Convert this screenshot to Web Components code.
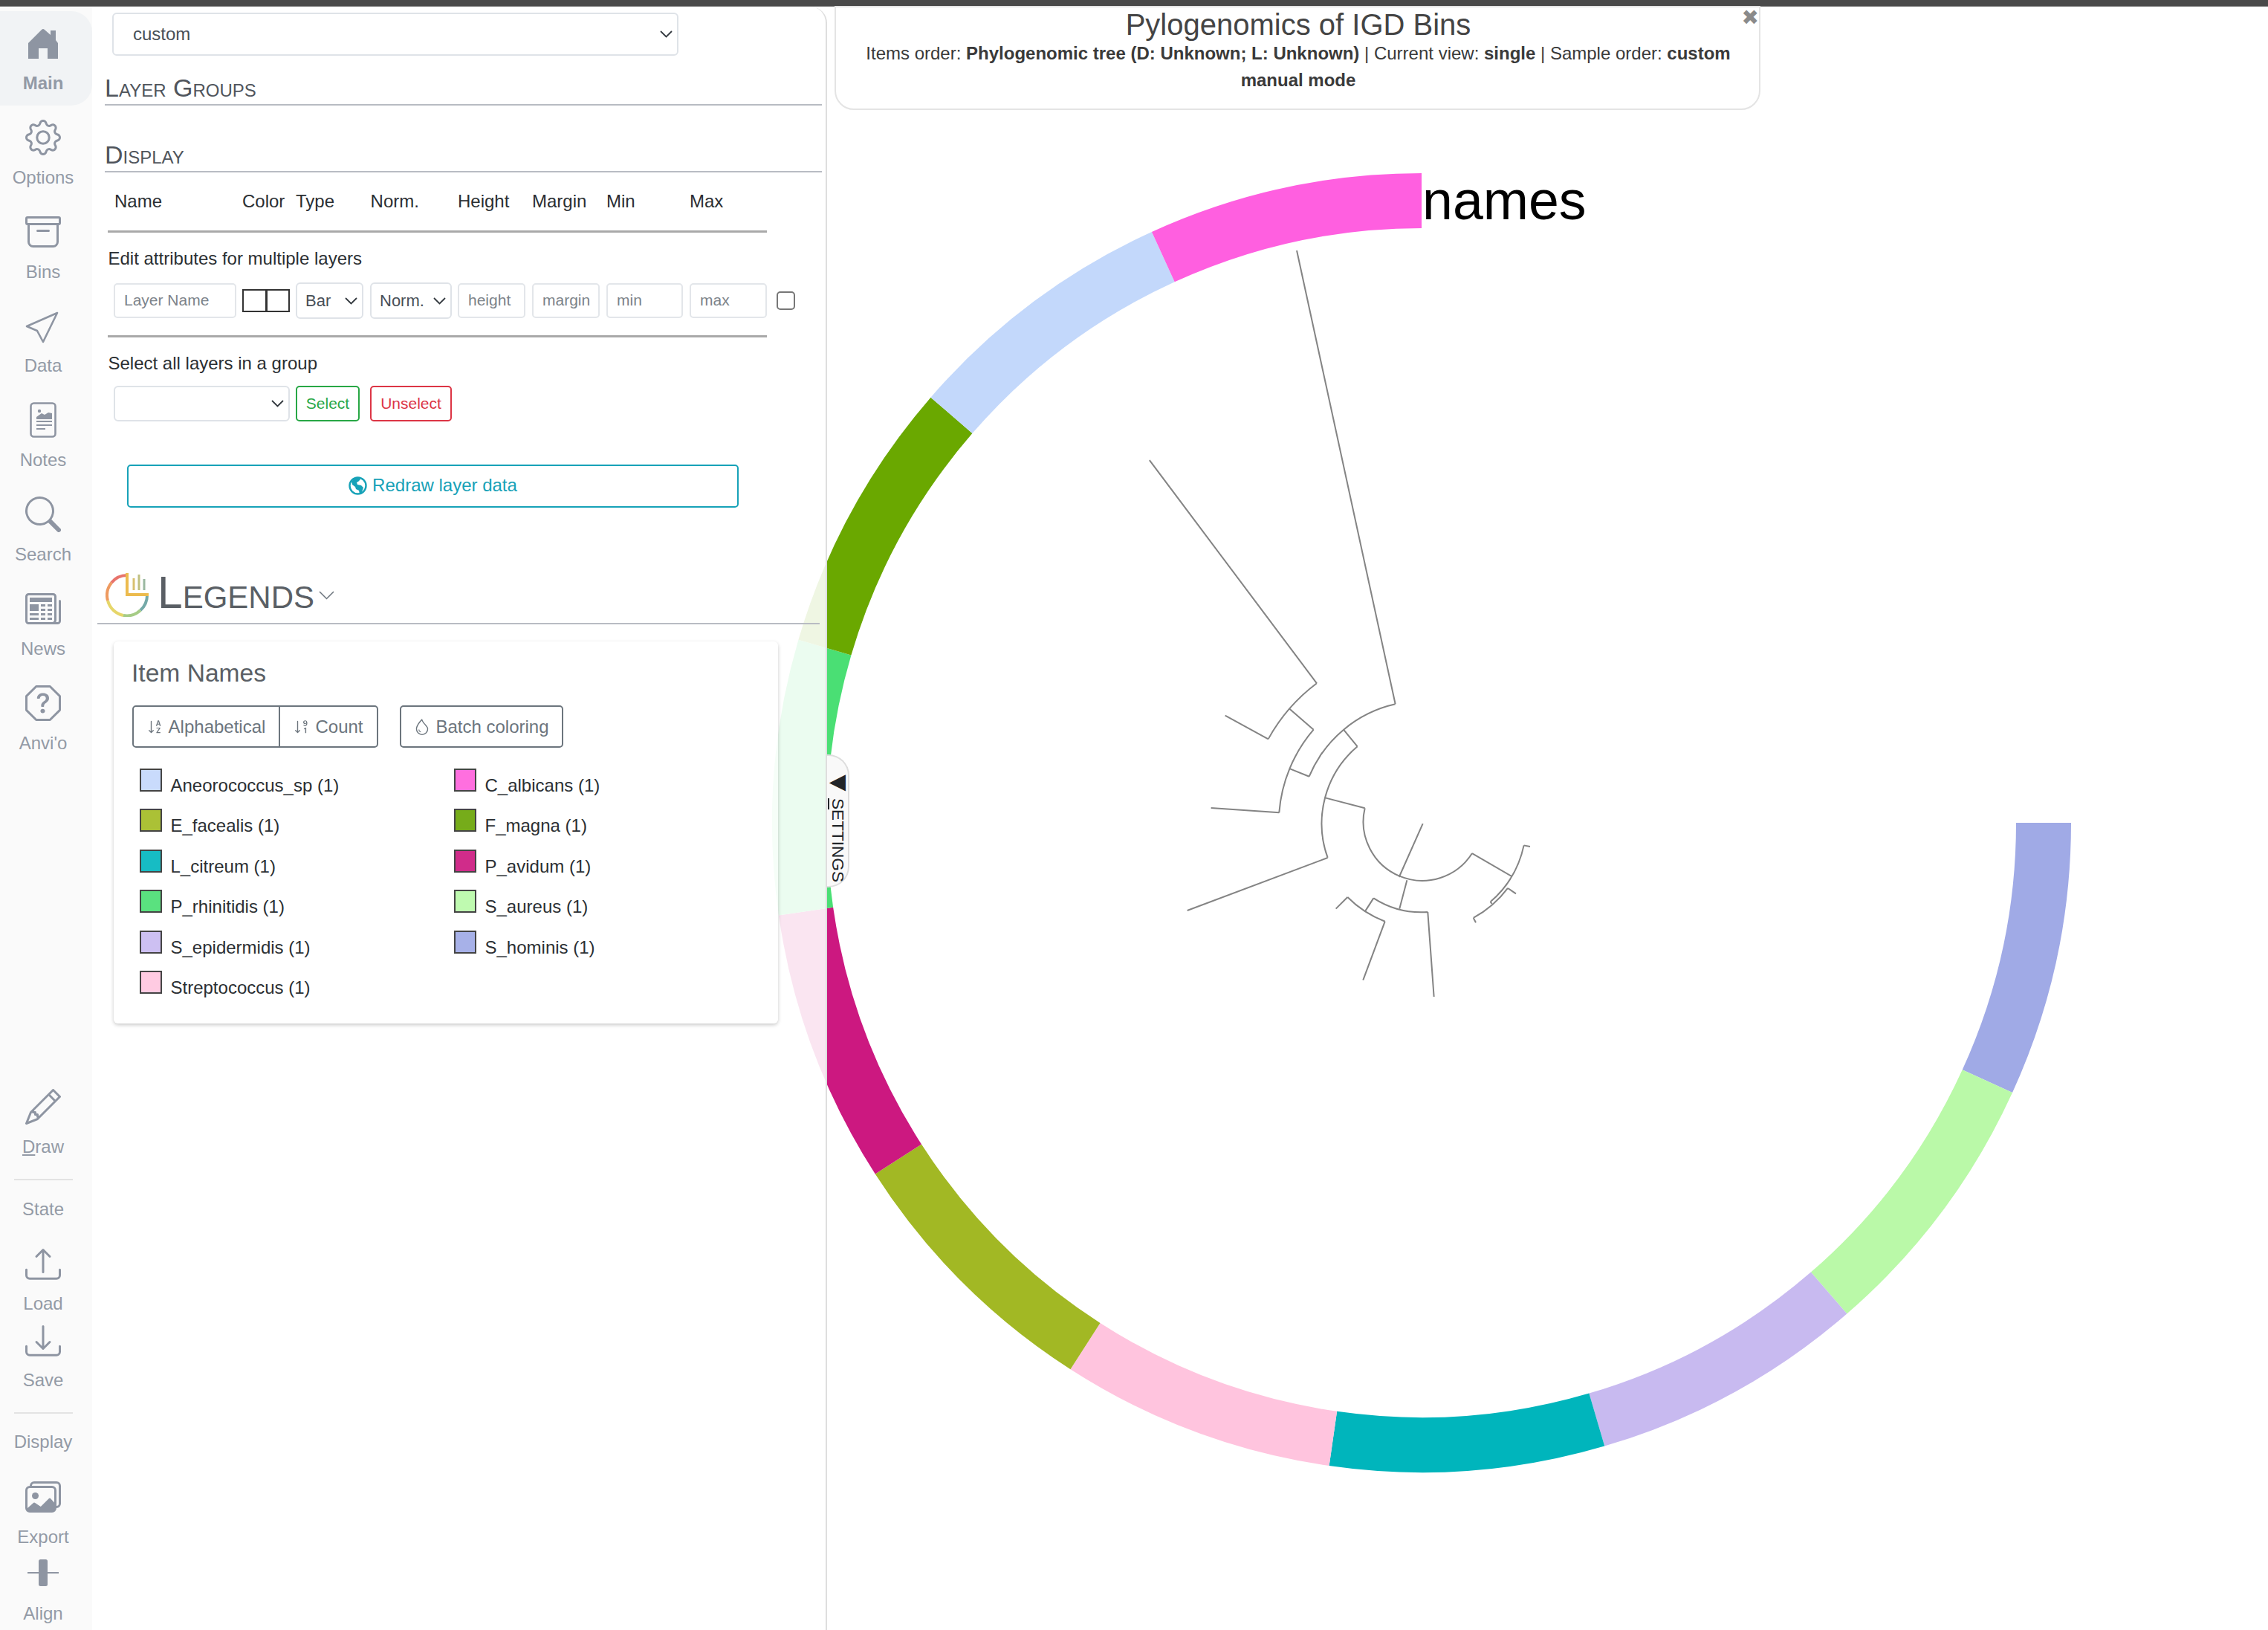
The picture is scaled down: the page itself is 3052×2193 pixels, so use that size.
<!DOCTYPE html>
<html><head><meta charset="utf-8"><title>Pylogenomics of IGD Bins</title>
<style>
html,body{margin:0;padding:0;background:#fff;height:2193px;overflow:hidden;font-family:"Liberation Sans",Arial,sans-serif;font-size:24px;color:#212529}
</style></head><body>
<anvio-canvas></anvio-canvas>
<app-shell>
  <side-bar slot="side"></side-bar>
  <settings-panel slot="panel"></settings-panel>
  <title-panel slot="main">
    <span slot="title">Pylogenomics of IGD Bins</span>
    Items order: <b>Phylogenomic tree (D: Unknown; L: Unknown)</b> | Current view: <b>single</b> | Sample order: <b>custom</b><br><b>manual mode</b>
  </title-panel>
</app-shell>
<script>
function def(name, html, setup){
  customElements.define(name, class extends HTMLElement{
    constructor(){super();const r=this.attachShadow({mode:'open'});r.innerHTML=html;}
    connectedCallback(){ if(setup && !this._done){this._done=true;setup(this,this.shadowRoot);} }
  });
}
const ICONS={
main:`<svg viewBox="0 0 48 48"><path fill="currentColor" d="M4 24 22 6q2-2 4 0l8 7V7h7v13l3 4v21H30V31H18v14H4z"/></svg>`,
options:`<svg viewBox="0 0 16 16"><path fill="currentColor" d="M8 4.754a3.246 3.246 0 1 0 0 6.492 3.246 3.246 0 0 0 0-6.492zM5.754 8a2.246 2.246 0 1 1 4.492 0 2.246 2.246 0 0 1-4.492 0z"/><path fill="currentColor" d="M9.796 1.343c-.527-1.79-3.065-1.79-3.592 0l-.094.319a.873.873 0 0 1-1.255.52l-.292-.16c-1.64-.892-3.433.902-2.54 2.541l.159.292a.873.873 0 0 1-.52 1.255l-.319.094c-1.79.527-1.79 3.065 0 3.592l.319.094a.873.873 0 0 1 .52 1.255l-.16.292c-.892 1.64.901 3.434 2.541 2.54l.292-.159a.873.873 0 0 1 1.255.52l.094.319c.527 1.79 3.065 1.79 3.592 0l.094-.319a.873.873 0 0 1 1.255-.52l.292.16c1.64.893 3.434-.902 2.54-2.541l-.159-.292a.873.873 0 0 1 .52-1.255l.319-.094c1.79-.527 1.79-3.065 0-3.592l-.319-.094a.873.873 0 0 1-.52-1.255l.16-.292c.893-1.64-.902-3.433-2.541-2.54l-.292.159a.873.873 0 0 1-1.255-.52l-.094-.319zm-2.633.283c.246-.835 1.428-.835 1.674 0l.094.319a1.873 1.873 0 0 0 2.693 1.115l.291-.16c.764-.415 1.6.42 1.184 1.185l-.159.292a1.873 1.873 0 0 0 1.116 2.692l.318.094c.835.246.835 1.428 0 1.674l-.319.094a1.873 1.873 0 0 0-1.115 2.693l.16.291c.415.764-.42 1.6-1.185 1.184l-.291-.159a1.873 1.873 0 0 0-2.693 1.116l-.094.318c-.246.835-1.428.835-1.674 0l-.094-.319a1.873 1.873 0 0 0-2.692-1.115l-.292.16c-.764.415-1.6-.42-1.184-1.185l.159-.291A1.873 1.873 0 0 0 1.945 8.93l-.319-.094c-.835-.246-.835-1.428 0-1.674l.319-.094A1.873 1.873 0 0 0 3.06 4.377l-.16-.292c-.415-.764.42-1.6 1.185-1.184l.292.159a1.873 1.873 0 0 0 2.692-1.115l.094-.319z"/></svg>`,
bins:`<svg viewBox="0 0 16 16"><path fill="currentColor" d="M0 2a1 1 0 0 1 1-1h14a1 1 0 0 1 1 1v2a1 1 0 0 1-1 1v7.5a2.5 2.5 0 0 1-2.5 2.5h-9A2.5 2.5 0 0 1 1 12.5V5a1 1 0 0 1-1-1V2zm2 3v7.5A1.5 1.5 0 0 0 3.5 14h9a1.5 1.5 0 0 0 1.5-1.5V5H2zm13-3H1v2h14V2zM5 7.5a.5.5 0 0 1 .5-.5h5a.5.5 0 0 1 0 1h-5a.5.5 0 0 1-.5-.5z"/></svg>`,
data:`<svg viewBox="0 0 48 48"><path fill="none" stroke="currentColor" stroke-width="2.6" stroke-linejoin="round" d="M43 7 2 25l14 6 8 15z"/></svg>`,
notes:`<svg viewBox="0 0 48 48"><g transform="translate(6 0)"><rect x="1.5" y="1.5" width="33" height="45" rx="4" fill="none" stroke="currentColor" stroke-width="2.6"/><circle cx="13" cy="12" r="2.2" fill="currentColor"/><path fill="currentColor" d="M9 23v-3l7-5 4 2 5-3 5 1v8z"/><path stroke="currentColor" stroke-width="2.2" d="M9 26h21M9 31h21M9 36h12"/></g></svg>`,
search:`<svg viewBox="0 0 16 16"><path fill="currentColor" d="M11.742 10.344a6.5 6.5 0 1 0-1.397 1.398h-.001c.03.04.062.078.098.115l3.85 3.85a1 1 0 0 0 1.415-1.414l-3.85-3.85a1.007 1.007 0 0 0-.115-.1zM12 6.5a5.5 5.5 0 1 1-11 0 5.5 5.5 0 0 1 11 0z"/></svg>`,
news:`<svg viewBox="0 0 16 16"><path fill="currentColor" d="M0 2.5A1.5 1.5 0 0 1 1.5 1h11A1.5 1.5 0 0 1 14 2.5v10.528c0 .3-.05.654-.238.972h.738a.5.5 0 0 0 .5-.5v-9a.5.5 0 0 1 1 0v9a1.5 1.5 0 0 1-1.5 1.5H1.497A1.497 1.497 0 0 1 0 13.5v-11zM12 14c.37 0 .654-.211.853-.441.092-.106.147-.279.147-.531V2.5a.5.5 0 0 0-.5-.5h-11a.5.5 0 0 0-.5.5v11c0 .278.223.5.497.5H12z"/><path fill="currentColor" d="M2 3h10v2H2V3zm0 3h4v3H2V6zm0 4h4v1H2v-1zm0 2h4v1H2v-1zm5-6h2v1H7V6zm3 0h2v1h-2V6zM7 8h2v1H7V8zm3 0h2v1h-2V8zm-3 2h2v1H7v-1zm3 0h2v1h-2v-1zm-3 2h2v1H7v-1zm3 0h2v1h-2v-1z"/></svg>`,
anvio:`<svg viewBox="0 0 16 16"><path fill="currentColor" d="M4.54.146A.5.5 0 0 1 4.893 0h6.214a.5.5 0 0 1 .353.146l4.394 4.394a.5.5 0 0 1 .146.353v6.214a.5.5 0 0 1-.146.353l-4.394 4.394a.5.5 0 0 1-.353.146H4.893a.5.5 0 0 1-.353-.146L.146 11.46A.5.5 0 0 1 0 11.107V4.893a.5.5 0 0 1 .146-.353L4.54.146zM5.1 1 1 5.1v5.8L5.1 15h5.8l4.1-4.1V5.1L10.9 1H5.1z"/><path fill="currentColor" d="M5.255 5.786a.237.237 0 0 0 .241.247h.825c.138 0 .248-.113.266-.25.09-.656.54-1.134 1.342-1.134.686 0 1.314.343 1.314 1.168 0 .635-.374.927-.965 1.371-.673.489-1.206 1.06-1.168 1.987l.003.217a.25.25 0 0 0 .25.246h.811a.25.25 0 0 0 .25-.25v-.105c0-.718.273-.927 1.01-1.486.609-.463 1.244-.977 1.244-2.056 0-1.511-1.276-2.241-2.673-2.241-1.267 0-2.655.59-2.75 2.286zm1.557 5.763c0 .533.425.927 1.01.927.609 0 1.028-.394 1.028-.927 0-.552-.42-.94-1.029-.94-.584 0-1.009.388-1.009.94z"/></svg>`,
draw:`<svg viewBox="0 0 16 16"><path fill="currentColor" d="M12.146.146a.5.5 0 0 1 .708 0l3 3a.5.5 0 0 1 0 .708l-10 10a.5.5 0 0 1-.168.11l-5 2a.5.5 0 0 1-.65-.65l2-5a.5.5 0 0 1 .11-.168l10-10zM11.207 2.5 13.5 4.793 14.793 3.5 12.5 1.207 11.207 2.5zm1.586 3L10.5 3.207 4 9.707V10h.5a.5.5 0 0 1 .5.5v.5h.5a.5.5 0 0 1 .5.5v.5h.293l6.5-6.5zm-9.761 5.175-.106.106-1.528 3.821 3.821-1.528.106-.106A.5.5 0 0 1 5 12.5V12h-.5a.5.5 0 0 1-.5-.5V11h-.5a.5.5 0 0 1-.468-.325z"/></svg>`,
load:`<svg viewBox="0 0 16 16"><path fill="currentColor" d="M.5 9.9a.5.5 0 0 1 .5.5v2.5a1 1 0 0 0 1 1h12a1 1 0 0 0 1-1v-2.5a.5.5 0 0 1 1 0v2.5a2 2 0 0 1-2 2H2a2 2 0 0 1-2-2v-2.5a.5.5 0 0 1 .5-.5z"/><path fill="currentColor" d="M7.646 1.146a.5.5 0 0 1 .708 0l3 3a.5.5 0 0 1-.708.708L8.5 2.707V11.5a.5.5 0 0 1-1 0V2.707L5.354 4.854a.5.5 0 1 1-.708-.708l3-3z"/></svg>`,
save:`<svg viewBox="0 0 16 16"><path fill="currentColor" d="M.5 9.9a.5.5 0 0 1 .5.5v2.5a1 1 0 0 0 1 1h12a1 1 0 0 0 1-1v-2.5a.5.5 0 0 1 1 0v2.5a2 2 0 0 1-2 2H2a2 2 0 0 1-2-2v-2.5a.5.5 0 0 1 .5-.5z"/><path fill="currentColor" d="M7.646 11.854a.5.5 0 0 0 .708 0l3-3a.5.5 0 0 0-.708-.708L8.5 10.293V1.5a.5.5 0 0 0-1 0v8.793L5.354 8.146a.5.5 0 1 0-.708.708l3 3z"/></svg>`,
export:`<svg viewBox="0 0 16 16"><path fill="currentColor" d="M4.502 9a1.5 1.5 0 1 0 0-3 1.5 1.5 0 0 0 0 3z"/><path fill="currentColor" d="M14.002 13a2 2 0 0 1-2 2h-10a2 2 0 0 1-2-2V5A2 2 0 0 1 2 3a2 2 0 0 1 2-2h10a2 2 0 0 1 2 2v8a2 2 0 0 1-1.998 2zM14 2H4a1 1 0 0 0-1 1h9.002a2 2 0 0 1 2 2v7A1 1 0 0 0 15 11V3a1 1 0 0 0-1-1zM2.002 4a1 1 0 0 0-1 1v8l2.646-2.354a.5.5 0 0 1 .63-.062l2.66 1.773 3.71-3.71a.5.5 0 0 1 .577-.094l1.777 1.947V5a1 1 0 0 0-1-1h-10z"/><path fill="currentColor" d="M1 13.5 3.9 11l2.9 1.9 4-3.8L13.2 12v1a1.4 1.4 0 0 1-1.2 1.4H2z"/></svg>`,
align:`<svg viewBox="0 0 48 48"><path fill="currentColor" d="M3 23h15v2H3zM30 23h15v2H30z"/><rect x="18" y="6" width="12" height="36" rx="2.5" fill="currentColor"/></svg>`
};
const CHEV=`<svg width="17" height="10" viewBox="0 0 17 10"><path d="M1 1l7.5 7.5L16 1" fill="none" stroke="#343a40" stroke-width="1.8"/></svg>`;

def('app-shell',`<style>
:host{display:flex;flex-direction:column;position:relative;z-index:1;width:3052px;height:2193px}
.bar{height:8px;background:#4a4a4a;flex:none;border-bottom:1px solid #777}
.row{display:flex;flex:1;min-height:0}
.main{flex:1;min-width:0}
</style><div class="bar"></div><div class="row"><slot name="side"></slot><slot name="panel"></slot><div class="main"><slot name="main"></slot></div></div>`);

def('side-bar',`<style>
:host{display:block;width:124px;flex:none;background:#fafafa;box-sizing:border-box;padding-top:6px;height:2184px}
hr{border:0;height:2px;background:#e3e3e3;width:79px;margin:0 0 0 19px}
.lbl{width:116px;text-align:center;font-size:24px;line-height:36px;color:#939aa6}
</style>
<side-item icon="main" selected>Main</side-item>
<side-item icon="options">Options</side-item>
<side-item icon="bins">Bins</side-item>
<side-item icon="data">Data</side-item>
<side-item icon="notes">Notes</side-item>
<side-item icon="search">Search</side-item>
<side-item icon="news">News</side-item>
<side-item icon="anvio">Anvi'o</side-item>
<side-item icon="draw" style="margin-top:417px"><u>D</u>raw</side-item>
<hr style="margin-top:13px">
<div class="lbl" style="margin-top:21px">State</div>
<side-item icon="load" style="--pt:32px;--gap:11px;--h:auto">Load</side-item>
<side-item icon="save" style="--pt:8px;--gap:11px;--h:auto">Save</side-item>
<hr style="margin-top:25px">
<div class="lbl" style="margin-top:20px">Display</div>
<side-item icon="export" style="--pt:32px;--gap:12px;--h:auto">Export</side-item>
<side-item icon="align" style="--pt:6px;--gap:13px;--h:auto">Align</side-item>
`);

def('side-item',`<style>
:host{display:block;width:124px;height:var(--h,126.8px);box-sizing:border-box;padding:var(--pt,19px) 8px 0 0;color:#8e95a2}
:host([selected]){background:#f1f3f5;border-radius:0 28px 28px 0}
:host([selected]) .t{font-weight:700}
.i{display:block;width:48px;height:48px;margin:0 auto}
.i svg{display:block;width:48px;height:48px}
.t{display:block;text-align:center;font-size:24px;line-height:36px;margin-top:var(--gap,12px);color:#939aa6}
</style><span class="i"></span><span class="t"><slot></slot></span>`,(h,r)=>{r.querySelector('.i').innerHTML=ICONS[h.getAttribute('icon')];});

def('section-head',`<style>
:host{display:block;height:40px;border-bottom:2px solid #b8bcc3;font-size:34px;line-height:36px;font-variant:small-caps;color:#50555c}
</style><slot></slot>`);

def('f-select',`<style>
:host{display:flex;align-items:center;justify-content:space-between;box-sizing:border-box;border:2px solid #dfe3e8;border-radius:6px;background:#fff;padding:0 6px 0 var(--pl,11px);font-size:var(--fs,22px);color:#495057;flex:none}
</style><span><slot></slot></span>${CHEV}`);

def('f-input',`<style>
:host{display:flex;align-items:center;box-sizing:border-box;height:47px;border:2px solid #e3e6ea;border-radius:5px;padding:0 0 2px 12px;font-size:21px;color:#7c838a;flex:none;background:#fff}
</style><slot></slot>`);

def('o-btn',`<style>
:host{display:inline-flex;align-items:center;justify-content:center;box-sizing:border-box;border:2px solid currentColor;border-radius:5px;flex:none;gap:7px;background:rgba(255,255,255,.6)}
</style><slot></slot>`);

def('legend-item',`<style>
:host{display:flex;align-items:flex-start;gap:11.5px;height:54.4px;font-size:24px;line-height:36px;color:#2b2f33}
i{display:block;box-sizing:border-box;width:30px;height:31px;border:2px solid #444;background:var(--c);flex:none}
span{margin-top:5px}
</style><i></i><span><slot></slot></span>`);

def('legend-card',`<style>
:host{display:block;box-sizing:border-box;width:894px;height:514px;margin:23px 0 0 12px;padding:23px 0 0 24px;background:rgba(255,255,255,.55);border-radius:6px;box-shadow:0 2px 5px rgba(0,0,0,.22)}
h3{margin:0;font-weight:400;font-size:33.6px;line-height:40px;color:#5a5f65}
.btns{display:flex;margin:23px 0 0 1px;color:#6c757d;font-size:24px}
.group{display:flex;height:57px;width:331px;box-sizing:border-box;border:2px solid #6c757d;border-radius:5px}
.group div{display:flex;align-items:center;justify-content:center;gap:7px}
.group div:first-child{width:195px;border-right:2px solid #6c757d}
.group div:last-child{flex:1}
o-btn{width:220px;height:57px;margin-left:29px;color:#6c757d}
svg{width:22px;height:22px;fill:currentColor;flex:none}
.grid{display:grid;grid-template-columns:423px 423px;margin:28px 0 0 11px}
</style>
<h3>Item Names</h3>
<div class="btns">
<div class="group">
<div><svg viewBox="0 0 16 16"><path d="M10.082 5.629 9.664 7H8.598l1.789-5.332h1.234L13.402 7h-1.12l-.419-1.371h-1.781zm1.57-.785L11 2.687h-.047l-.652 2.157h1.351z"/><path d="M12.96 14H9.028v-.691l2.579-3.72v-.054H9.098v-.867h3.785v.691l-2.567 3.72v.054h2.645V14zM4.5 2.5a.5.5 0 0 0-1 0v9.793l-1.146-1.147a.5.5 0 0 0-.708.708l2 1.999.007.007a.497.497 0 0 0 .7-.006l2-2a.5.5 0 0 0-.707-.708L4.5 12.293V2.5z"/></svg><span>Alphabetical</span></div>
<div><svg viewBox="0 0 16 16"><path transform="translate(0 7)" d="M12.438 1.668V7H11.39V2.684h-.051l-1.211.859v-.969l1.262-.906h1.046z"/><path transform="translate(0 -7)" d="M11.36 14.098c-1.137 0-1.708-.657-1.762-1.278h1.004c.058.223.343.45.773.45.824 0 1.164-.829 1.133-1.856h-.059c-.148.39-.57.742-1.261.742-.91 0-1.72-.613-1.72-1.758 0-1.148.848-1.835 1.973-1.835 1.09 0 2.063.636 2.063 2.687 0 1.867-.723 2.848-2.145 2.848zm.062-2.735c.504 0 .933-.336.933-.972 0-.633-.398-1.008-.94-1.008-.52 0-.927.375-.927 1 0 .64.418.98.934.98z"/><path d="M4.5 2.5a.5.5 0 0 0-1 0v9.793l-1.146-1.147a.5.5 0 0 0-.708.708l2 1.999.007.007a.497.497 0 0 0 .7-.006l2-2a.5.5 0 0 0-.707-.708L4.5 12.293V2.5z"/></svg><span>Count</span></div>
</div>
<o-btn><svg viewBox="0 0 16 16"><path d="M7.21.8C7.69.295 8 0 8 0c.109.363.234.708.371 1.038.812 1.946 2.073 3.35 3.197 4.6C12.878 7.096 14 8.345 14 10a6 6 0 0 1-12 0C2 6.668 5.58 2.517 7.21.8zm.413 1.021A31.25 31.25 0 0 0 5.794 3.99c-.726.95-1.436 2.008-1.96 3.07C3.304 8.133 3 9.138 3 10a5 5 0 0 0 10 0c0-1.201-.796-2.157-2.181-3.7l-.03-.032C9.75 5.11 8.5 3.72 7.623 1.82z"/><path d="M4.5 10.5c0 1.4.9 2.4 2.2 2.8l.2-.7c-.9-.3-1.6-1-1.6-2.1z"/></svg><span>Batch coloring</span></o-btn>
</div>
<div class="grid">
<legend-item style="--c:#c9dbfc">Aneorococcus_sp (1)</legend-item>
<legend-item style="--c:#ff6fdf">C_albicans (1)</legend-item>
<legend-item style="--c:#abc136">E_facealis (1)</legend-item>
<legend-item style="--c:#76ac1a">F_magna (1)</legend-item>
<legend-item style="--c:#17bcc4">L_citreum (1)</legend-item>
<legend-item style="--c:#d02c8a">P_avidum (1)</legend-item>
<legend-item style="--c:#5ae17f">P_rhinitidis (1)</legend-item>
<legend-item style="--c:#bffab0">S_aureus (1)</legend-item>
<legend-item style="--c:#cdc0f2">S_epidermidis (1)</legend-item>
<legend-item style="--c:#a7b1e8">S_hominis (1)</legend-item>
<legend-item style="--c:#ffcbe2">Streptococcus (1)</legend-item>
</div>`);

def('settings-panel',`<style>
:host{display:block;position:relative;box-sizing:border-box;width:989px;height:2184px;flex:none;padding:8px 5px 0 17px;background:rgba(255,255,255,.89);border-right:2px solid #dedede;border-top-right-radius:22px;font-size:24px;line-height:36px;color:#2b2f33}
.sel{margin-left:10px;width:762px;height:58px;--fs:24px;--pl:26px}
.h1{margin-top:25px}.h2{margin-top:48px}
.cols{display:grid;grid-template-columns:172px 72px 100.6px 117.4px 100px 100px 112px auto;margin:21px 0 0 13px;height:36px}
.rule{height:3px;background:#a9a9a9;width:887px;margin:21px 0 0 4px}
.cap{margin:17px 0 0 4.5px;height:36px}
.row{display:flex;align-items:center;height:49px;margin:14px 0 0 12px;position:relative}
.cb{display:flex;width:64px;height:31px;box-sizing:border-box;border:2px solid #333;margin:0 8px 0 8px;flex:none}
.cb b{flex:1}.cb b:first-child{border-right:3px solid #333}
.row f-input+f-input{margin-left:9px}
.row f-select{height:49px;--fs:22px;--pl:11px}
.s2{margin-left:9px}
.chk{width:25px;height:25px;box-sizing:border-box;border:2px solid #777;border-radius:5px;margin-left:13px;flex:none;background:#fff}
.row2{display:flex;height:48px;margin:12px 0 0 12px}
.row2 f-select{width:237px;height:48px}
o-btn.a{width:86px;height:48px;margin-left:8px;color:#28a745;font-size:21px}
o-btn.b{width:110px;height:48px;margin-left:14px;color:#dc3545;font-size:21px}
.redraw{display:flex;width:823px;height:58px;margin:58px 0 0 30px;color:#17a2b8;font-size:24px;gap:7px;padding-bottom:2px}
.legend{display:flex;align-items:flex-start;width:972px;box-sizing:border-box;height:72px;margin:85px 0 0 -10px;padding:2px 0 0 11px;border-bottom:2px solid #b8bcc3;font-size:60.5px;line-height:54px;font-variant:small-caps;color:#5a5f65}
.legend .w{margin-left:10px}
.legend svg.c{margin:25px 0 0 6px}
.tab{position:absolute;left:100%;margin-left:2px;top:1006px;width:30px;height:179px;box-sizing:border-box;background:#f9f9f9;border:2px solid #ddd;border-left:0;border-radius:0 28px 28px 0;writing-mode:vertical-rl;font-size:22.6px;line-height:26px;color:#212529;display:flex;align-items:center;padding-top:17px}
.tab span{white-space:pre}
.tab .tri{font-size:29px;margin-bottom:6px;line-height:22px;font-family:"DejaVu Sans",sans-serif}
</style>
<f-select class="sel">custom</f-select>
<section-head class="h1">Layer Groups</section-head>
<section-head class="h2">Display</section-head>
<div class="cols"><span>Name</span><span>Color</span><span>Type</span><span>Norm.</span><span>Height</span><span>Margin</span><span>Min</span><span>Max</span></div>
<div class="rule"></div>
<div class="cap">Edit attributes for multiple layers</div>
<div class="row">
<f-input style="width:165px">Layer Name</f-input>
<div class="cb"><b></b><b></b></div>
<f-select style="width:91px">Bar</f-select>
<f-select class="s2" style="width:110px;--pl:11px">Norm.</f-select>
<f-input style="width:91px;margin-left:8px">height</f-input>
<f-input style="width:91px">margin</f-input>
<f-input style="width:103px">min</f-input>
<f-input style="width:104px;margin-left:9px">max</f-input>
<div class="chk"></div>
</div>
<div class="rule" style="margin-top:22px;height:3px"></div>
<div class="cap" style="margin-top:17px">Select all layers in a group</div>
<div class="row2"><f-select></f-select><o-btn class="a">Select</o-btn><o-btn class="b">Unselect</o-btn></div>
<o-btn class="redraw"><svg width="25" height="25" viewBox="0 0 25 25"><circle cx="12.5" cy="12.5" r="11" fill="none" stroke="#17a2b8" stroke-width="2.4"/><path fill="#17a2b8" d="M8 2 14 1l2 3-3 3-2 1 1 3 5 1 3 3-2 6-3 3-1-5-4-2-1-3-4-3-1-4z"/></svg><span>Redraw layer data</span></o-btn>
<div class="legend"><svg width="60" height="60" viewBox="0 0 60 60" style="flex:none"><g fill="none" stroke-width="4"><path stroke="#e8746c" d="M29 4A27 27 0 0 0 8 14"/><path stroke="#ee9a60" d="M8 14A27 27 0 0 0 3 38"/><path stroke="#e6d66a" d="M3 38A27 27 0 0 0 24 58"/><path stroke="#a6cc86" d="M24 58A27 27 0 0 0 47 51"/><path stroke="#74a9a8" d="M47 51A27 27 0 0 0 56 31"/><path stroke="#ecbb4e" d="M29 1V30H58"/></g><path stroke-width="3" stroke="#d8c070" d="M38 8V24"/><path stroke-width="3" stroke="#c0c080" d="M45 3V24"/><path stroke-width="3" stroke="#9ab8a0" d="M52 9V24"/></svg><span class="w">Legends</span><svg class="c" width="21" height="12" viewBox="0 0 21 12"><path d="M1 1l9.5 9.5L20 1" fill="none" stroke="#6c757d" stroke-width="1.5"/></svg></div>
<legend-card></legend-card>
<div class="tab"><span class="tri">◀</span><span><u>S</u>ETTINGS</span></div>
`);

def('title-panel',`<style>
:host{display:block;box-sizing:border-box;width:1246px;height:140px;margin:-1px 0 0 10px;border:2px solid #e4e4e4;border-radius:0 0 26px 26px;background:#fff;position:relative;text-align:center;font-size:24px;line-height:36px;color:#3a3a3a;padding:0 19px 0 21px}
.t{font-size:40px;line-height:44px;color:#444;padding-top:1px;margin-bottom:-1px}
.x{position:absolute;right:0;top:0;font-size:28px;line-height:28px;color:#8a8a8a;font-family:"DejaVu Sans",sans-serif}
</style><div class="t"><slot name="title"></slot></div><div><slot></slot></div><span class="x">✖</span>`);

def('anvio-canvas',`<style>
:host{display:block;position:absolute;left:0;top:0;z-index:0;width:3052px;height:2193px}
svg{display:block}
text{font-family:"Liberation Sans",Arial,sans-serif}
</style><svg id="s" width="3052" height="2193" viewBox="0 0 3052 2193"></svg>`,(h,r)=>{
  const cx=1913,cy=1107,R=874,Q=800;
  const cols=['#a0aae6','#baf9a8','#c8baf0','#00b5bc','#ffc4de','#a2b824','#cc1880','#4adf74','#6aa800','#c3d8fb','#ff5fe0'];
  const st=270/cols.length, p=(r,a)=>{a=a*Math.PI/180;return (cx+r*Math.cos(a)).toFixed(2)+' '+(cy+r*Math.sin(a)).toFixed(2)};
  let o='';
  cols.forEach((c,i)=>{const a=i*st,b=(i+1)*st;
    o+=`<path fill="${c}" d="M${p(Q,a)}L${p(R,a)}A${R} ${R} 0 0 1 ${p(R,b)}L${p(Q,b)}A${Q} ${Q} 0 0 0 ${p(Q,a)}Z"/>`;});
  o+=`<text x="1914" y="295" font-size="73.5" fill="#000">names</text>`;
  const T=[
   'M1913 1107L1881.2 1178.6',
   'M1835.4 1086.4A79 79 0 0 0 1979 1146.8',
   'M1835.4 1086.4L1782.3 1072.5',
   'M1785.6 1152.7A135 135 0 0 1 1825.4 1003.8',
   'M1785.6 1152.7L1597.6 1223.4',
   'M1825.4 1003.8L1807.5 981.9',
   'M1760.8 1044A164 164 0 0 1 1876.2 947.1',
   'M1876.2 947.1L1744.2 339.8',
   'M1760.8 1044L1735.2 1033.7',
   'M1720.6 1092.4A193 193 0 0 1 1766.7 981.3',
   'M1720.6 1092.4L1629.4 1086',
   'M1766.7 981.3L1734.9 953.7',
   'M1706 993.9A236 236 0 0 1 1771 919.2',
   'M1706 993.9L1648.3 962.4',
   'M1771 919.2L1547 620.5',
   'M1891.8 1182.9L1881.8 1221',
   'M1847 1206.8A119 119 0 0 0 1919.6 1225.4',
   'M1919.6 1225.4L1927.9 1338.8',
   'M1847 1206.8L1836 1224',
   'M1812.2 1205.5A141 141 0 0 0 1862.3 1238',
   'M1812.2 1205.5L1796.6 1221',
   'M1862.3 1238L1833 1316.6',
   'M1979 1146.8L2031.4 1177.3',
   'M2048.3 1136.2A138 138 0 0 1 2003.5 1211.8',
   'M2048.3 1136.2L2056.6 1137.8',
   'M2003.5 1211.8L2005.5 1214.4',
   'M1980.7 1233.3A143 143 0 0 0 2026.8 1193.5',
   'M2026.8 1193.5L2037.7 1200.8',
   'M1980.7 1233.3L1984 1239.6'];
  o+=`<g transform="translate(1580 900) scale(1.005) translate(-1580 -900)"><path fill="none" stroke="#848484" stroke-width="2" d="${T.join('')}"/></g>`;
  r.getElementById('s').innerHTML=o;
});
</script>
</body></html>
